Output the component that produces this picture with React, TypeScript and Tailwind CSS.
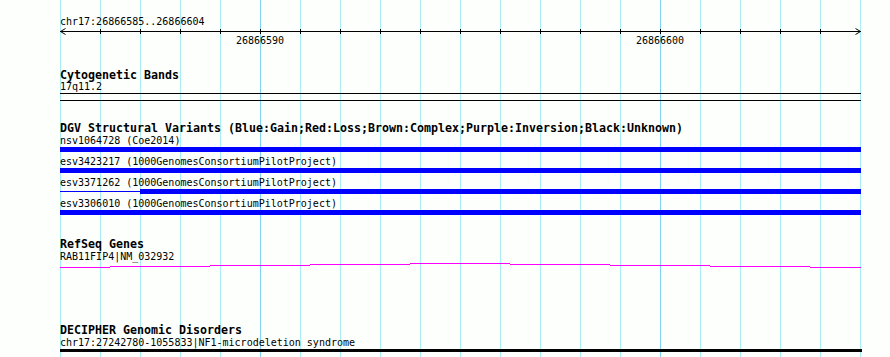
const MONO = "font-['DejaVu_Sans_Mono',monospace] text-black";
const REG = "h-[11px] text-[10px] leading-[11px] whitespace-pre";
const BOLD = "h-[12px] text-[11.63px] leading-[12px] font-bold whitespace-pre";

const GRID = Array.from({ length: 21 }, (_, i) => 60 + i * 40);

function GridLines() {
  return (
    <svg className="absolute inset-0" width={890} height={357} shapeRendering="crispEdges">
      {GRID.map((x) => (
        <line
          key={x}
          x1={x + 0.5}
          x2={x + 0.5}
          y1={0}
          y2={357}
          stroke={x === 260 || x === 660 ? "#80d2f0" : "#a8eef2"}
          strokeWidth={1}
        />
      ))}
    </svg>
  );
}

function Ruler() {
  return (
    <svg width={801} height={7} className="block overflow-visible" shapeRendering="crispEdges">
      <line x1={0} x2={801} y1={3.5} y2={3.5} stroke="#000" />
      {GRID.slice(1, -1).map((x) => (
        <line key={x} x1={x - 60 + 0.5} x2={x - 60 + 0.5} y1={1} y2={6} stroke="#000" />
      ))}
      <polyline points="5.5,0.5 0.5,3.5 5.5,6.5" fill="none" stroke="#000" shapeRendering="auto" />
      <polyline points="795.5,0.5 800.5,3.5 795.5,6.5" fill="none" stroke="#000" shapeRendering="auto" />
    </svg>
  );
}

// stepped intron line, one step per 100px
const ARC = [
  [0, 50, 4],
  [50, 150, 3],
  [150, 250, 2],
  [250, 350, 1],
  [350, 450, 0],
  [450, 550, 1],
  [550, 650, 2],
  [650, 750, 3],
  [750, 801, 4],
];

function GeneLine() {
  return (
    <svg width={801} height={5} className="block mt-px" shapeRendering="crispEdges">
      {ARC.map(([a, b, y]) => (
        <rect key={a} x={a} y={y} width={b - a} height={1} fill="#ff00ff" />
      ))}
    </svg>
  );
}

function Variant({ label, first }: { label: string; first?: boolean }) {
  return (
    <>
      <div className={`${REG} ${first ? "mt-px" : "mt-[4px]"}`}>{label}</div>
      <div className="mt-px h-[5px] w-[801px] bg-[#0000ff]" />
    </>
  );
}

export default function App() {
  return (
    <div className={`relative w-[890px] h-[357px] overflow-hidden bg-[#fcfffc] ${MONO}`}>
      <GridLines />
      <div className="relative flex flex-col pl-[60px]">
        {/* ruler */}
        <div className={`${REG} mt-[16px] h-[12px] leading-[12px]`}>chr17:26866585..26866604</div>
        <Ruler />
        <div className={`${REG} flex`}>
          <span className="ml-[160px] w-[80px] text-center">26866590</span>
          <span className="ml-[320px] w-[80px] text-center">26866600</span>
        </div>

        {/* cytobands */}
        <div className={`${BOLD} mt-[23px]`}>Cytogenetic Bands</div>
        <div className={REG}>17q11.2</div>
        <div className="mt-px h-px w-[801px] bg-black" />
        <div className="mt-[6px] h-px w-[801px] bg-black" />

        {/* DGV */}
        <div className={`${BOLD} mt-[21px]`}>
          DGV Structural Variants (Blue:Gain;Red:Loss;Brown:Complex;Purple:Inversion;Black:Unknown)
        </div>
        <Variant label="nsv1064728 (Coe2014)" first />
        <Variant label="esv3423217 (1000GenomesConsortiumPilotProject)" />
        <div className={`${REG} mt-[4px]`}>esv3371262 (1000GenomesConsortiumPilotProject)</div>
        <div className="mt-px flex h-[5px] w-[801px]">
          <div className="flex w-[80px] items-center">
            <div className="h-px w-full bg-[#0000ff]" />
          </div>
          <div className="h-[5px] flex-1 bg-[#0000ff]" />
        </div>
        <Variant label="esv3306010 (1000GenomesConsortiumPilotProject)" />

        {/* RefSeq */}
        <div className={`${BOLD} mt-[23px]`}>RefSeq Genes</div>
        <div className={`${REG} mt-px`}>RAB11FIP4|NM_032932</div>
        <GeneLine />

        {/* DECIPHER */}
        <div className={`${BOLD} mt-[56px]`}>DECIPHER Genomic Disorders</div>
        <div className={`${REG} mt-px`}>chr17:27242780-1055833|NF1-microdeletion syndrome</div>
        <div className="mt-px h-[3px] w-[802px] bg-black" />
      </div>
    </div>
  );
}
